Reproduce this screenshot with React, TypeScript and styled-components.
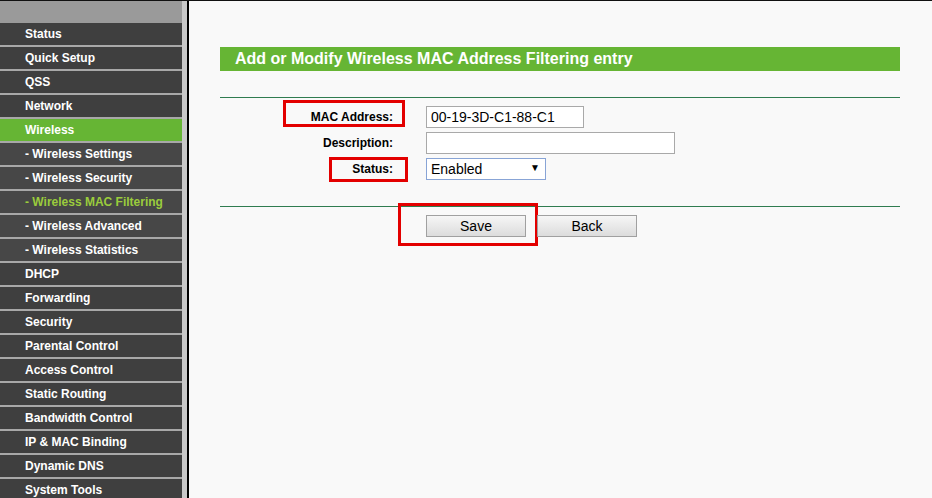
import React from "react";
import styled, { createGlobalStyle } from "styled-components";

const GlobalStyle = createGlobalStyle`
  html, body {
    margin: 0;
    padding: 0;
    height: 100%;
    overflow: hidden;
    background: #f9f9f9;
    font-family: "Liberation Sans", Arial, sans-serif;
  }
  #root {
    height: 100%;
  }
`;

const PageLayout = styled.div`
  display: flex;
  height: 498px;
  border-top: 1px solid #111;
  box-sizing: border-box;
`;

const Sidebar = styled.nav`
  width: 182px;
  flex-shrink: 0;
  background: #404040;
  border-right: 5px solid #c8c8c8;
  box-shadow: 2px 0 0 #000;
  overflow: hidden;
`;

const SidebarTop = styled.div`
  height: 22px;
  background: #9a9a9a;
`;

const MenuItem = styled.div<{ active?: boolean; sub?: boolean; current?: boolean }>`
  height: 22px;
  line-height: 22px;
  padding-left: 25px;
  border-bottom: 2px solid #a8a8a8;
  background: ${(p) => (p.active ? "#66b534" : p.sub ? "#474747" : "#3f3f3f")};
  color: ${(p) => (p.current ? "#9bcc3c" : "#fff")};
  font-size: 12px;
  font-weight: bold;
  white-space: nowrap;
`;

const Content = styled.main`
  flex: 1;
  margin-left: 2px;
  padding: 46px 32px 0 31px;
  background: #f9f9f9;
`;

const HeaderTitle = styled.div`
  height: 24px;
  line-height: 24px;
  background: #66b534;
  color: #fff;
  font-size: 16px;
  font-weight: bold;
  padding-left: 15px;
`;

const Rule = styled.div<{ top: number }>`
  margin-top: ${(p) => p.top}px;
  height: 1px;
  background: #2f7c50;
`;

const FormGrid = styled.div`
  display: grid;
  grid-template-columns: 206px 1fr;
  grid-auto-rows: 22px;
  row-gap: 4px;
  margin-top: 8px;
`;

const LabelCell = styled.div`
  display: flex;
  justify-content: flex-end;
  align-items: center;
  padding-right: 33px;
`;

const Label = styled.span`
  position: relative;
  font-size: 12px;
  font-weight: bold;
  color: #000;
`;

const Highlight = styled.span<{ left?: number; right?: number; top: number; width: number; height: number }>`
  position: absolute;
  ${(p) => (p.left !== undefined ? `left: ${p.left}px;` : "")}
  ${(p) => (p.right !== undefined ? `right: ${p.right}px;` : "")}
  top: ${(p) => p.top}px;
  width: ${(p) => p.width}px;
  height: ${(p) => p.height}px;
  border: 3px solid #e30000;
  box-sizing: border-box;
  pointer-events: none;
`;

const FieldCell = styled.div`
  display: flex;
  align-items: center;
`;

const TextInput = styled.input<{ w: number }>`
  width: ${(p) => p.w}px;
  height: 22px;
  box-sizing: border-box;
  border: 1px solid #a9a9a9;
  background: #fff;
  font-family: "Liberation Sans", Arial, sans-serif;
  font-size: 14px;
  color: #000;
  padding: 0 4px;
  outline: none;
`;

const SelectWrap = styled.div`
  position: relative;
  width: 120px;
  height: 22px;
`;

const Select = styled.select`
  appearance: none;
  width: 120px;
  height: 22px;
  box-sizing: border-box;
  border: 1px solid #88a4d6;
  background: #fff;
  font-family: "Liberation Sans", Arial, sans-serif;
  font-size: 14px;
  color: #000;
  padding: 0 4px;
  outline: none;
`;

const SelectArrow = styled.span`
  position: absolute;
  right: 6px;
  top: 4px;
  font-size: 10px;
  color: #000;
  pointer-events: none;
`;

const ButtonRow = styled.div`
  display: flex;
  gap: 11px;
  margin-top: 8px;
  padding-left: 206px;
`;

const ButtonWrap = styled.div`
  position: relative;
`;

const Button = styled.button`
  width: 100px;
  height: 22px;
  box-sizing: border-box;
  border: 1px solid #a0a0a0;
  background: linear-gradient(#f6f6f6, #dcdcdc);
  font-family: "Liberation Sans", Arial, sans-serif;
  font-size: 14px;
  color: #000;
  padding: 0;
`;

const menu: { label: string; sub?: boolean; active?: boolean; current?: boolean }[] = [
  { label: "Status" },
  { label: "Quick Setup" },
  { label: "QSS" },
  { label: "Network" },
  { label: "Wireless", active: true },
  { label: "- Wireless Settings", sub: true },
  { label: "- Wireless Security", sub: true },
  { label: "- Wireless MAC Filtering", sub: true, current: true },
  { label: "- Wireless Advanced", sub: true },
  { label: "- Wireless Statistics", sub: true },
  { label: "DHCP" },
  { label: "Forwarding" },
  { label: "Security" },
  { label: "Parental Control" },
  { label: "Access Control" },
  { label: "Static Routing" },
  { label: "Bandwidth Control" },
  { label: "IP & MAC Binding" },
  { label: "Dynamic DNS" },
  { label: "System Tools" },
];

export default function App() {
  return (
    <>
      <GlobalStyle />
      <PageLayout>
        <Sidebar>
          <SidebarTop />
          {menu.map((m) => (
            <MenuItem key={m.label} sub={m.sub} active={m.active} current={m.current}>
              {m.label}
            </MenuItem>
          ))}
        </Sidebar>
        <Content>
          <HeaderTitle>Add or Modify Wireless MAC Address Filtering entry</HeaderTitle>
          <Rule top={26} />
          <FormGrid>
            <LabelCell>
              <Label>
                MAC Address:
                <Highlight right={-12} top={-10} width={122} height={27} />
              </Label>
            </LabelCell>
            <FieldCell>
              <TextInput w={158} defaultValue="00-19-3D-C1-88-C1" />
            </FieldCell>
            <LabelCell>
              <Label>Description:</Label>
            </LabelCell>
            <FieldCell>
              <TextInput w={249} defaultValue="" />
            </FieldCell>
            <LabelCell>
              <Label>
                Status:
                <Highlight right={-15} top={-5} width={79} height={25} />
              </Label>
            </LabelCell>
            <FieldCell>
              <SelectWrap>
                <Select defaultValue="1">
                  <option value="1">Enabled</option>
                  <option value="0">Disabled</option>
                </Select>
                <SelectArrow>▼</SelectArrow>
              </SelectWrap>
            </FieldCell>
          </FormGrid>
          <Rule top={26} />
          <ButtonRow>
            <ButtonWrap>
              <Button>Save</Button>
              <Highlight left={-28} top={-12} width={140} height={43} />
            </ButtonWrap>
            <ButtonWrap>
              <Button>Back</Button>
            </ButtonWrap>
          </ButtonRow>
        </Content>
      </PageLayout>
    </>
  );
}
